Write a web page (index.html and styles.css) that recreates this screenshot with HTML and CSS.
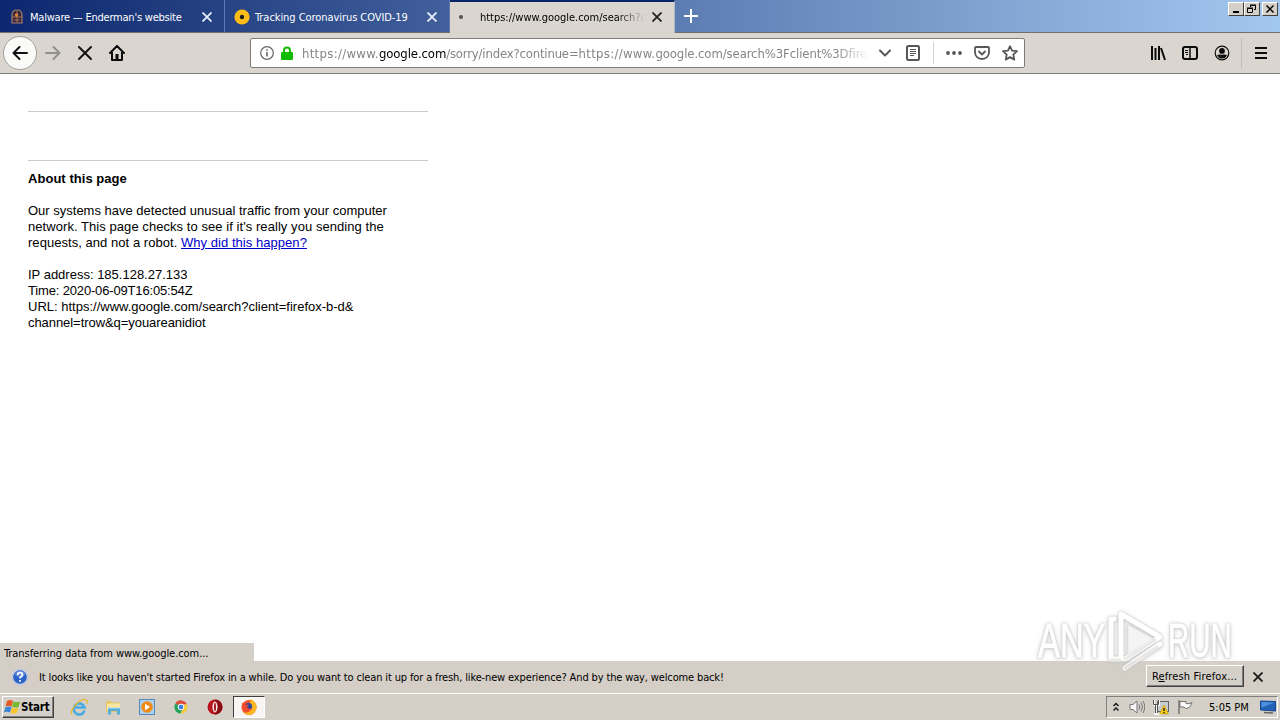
FILE: index.html
```html
<!DOCTYPE html>
<html lang="en">
<head>
  <meta charset="UTF-8">
  <title>https://www.google.com/search</title>
  <link rel="stylesheet" href="styles.css">
</head>
<body>

  <div class="tabbar">
    <div class="tab">
      <svg class="favicon" viewBox="0 0 16 16">
        <path d="M3 14V6q0-5 5-5t5 5v8z" fill="#35243b" stroke="#a3826f" stroke-width="1.200"/>
        <path d="M8 2v12M3 8h10M5 11h6" stroke="#a87258" stroke-width="1"/>
        <circle cx="7.500" cy="6" r="1.800" fill="#d98237"/>
      </svg>
      <span class="tab-title t1">Malware — Enderman's website</span>
      <svg class="tab-close" viewBox="0 0 10 10"><path d="M.5.5l9 9M9.500.5l-9 9"/></svg>
    </div>
    <div class="tab">
      <svg class="favicon" viewBox="0 0 16 16">
        <circle cx="8" cy="8" r="7.600" fill="#fbbc18"/>
        <circle cx="8" cy="8" r="2.200" fill="#1b1b20"/>
      </svg>
      <span class="tab-title t2">Tracking Coronavirus COVID-19</span>
      <svg class="tab-close" viewBox="0 0 10 10"><path d="M.5.5l9 9M9.500.5l-9 9"/></svg>
    </div>
    <div class="tab active">
      <span class="throbber"></span>
      <span class="tab-title t3">https://www.google.com/search?q</span>
      <svg class="tab-close" viewBox="0 0 10 10"><path d="M.5.5l9 9M9.500.5l-9 9"/></svg>
    </div>
    <svg class="new-tab" viewBox="0 0 14 14"><path d="M7 0v14M0 7h14" stroke="#fff" stroke-width="2"/></svg>
    <div class="caption">
      <span class="cap"><svg viewBox="0 0 12 10"><path d="M3 8h6" stroke="#000" stroke-width="2"/></svg></span>
      <span class="cap"><svg viewBox="0 0 12 10" fill="none" stroke="#000"><path d="M4.500 3V1.500h5v4H8M4 1h6M1.500 4.500h5v4h-5zM1 4h6"/></svg></span>
      <span class="cap last"><svg viewBox="0 0 12 10"><path d="M2.500 1.500l7 7M9.500 1.500l-7 7" stroke="#000" stroke-width="1.500"/></svg></span>
    </div>
  </div>

  <div class="navbar">
    <div class="back">
      <svg width="16" height="16" viewBox="0 0 16 16" fill="none" stroke="#111" stroke-width="2" stroke-linecap="round" stroke-linejoin="round"><path d="M15 8H1.500M7.500 2l-6 6 6 6"/></svg>
    </div>
    <svg class="forward" viewBox="0 0 16 16" fill="none" stroke="#92908c" stroke-width="2" stroke-linecap="round" stroke-linejoin="round"><path d="M1 8h13.500M8.500 2l6 6-6 6"/></svg>
    <svg class="stop" viewBox="0 0 16 16" stroke="#111" stroke-width="2" stroke-linecap="round"><path d="M2 2l12 12M14 2L2 14"/></svg>
    <svg class="home" viewBox="0 0 16 16" fill="none" stroke="#0c0c0d" stroke-width="2" stroke-linejoin="round" stroke-linecap="round"><path d="M1 8l7-7 7 7M3 7v8h10V7"/><path d="M8 9v5" stroke-width="3" stroke-linecap="butt"/></svg>

    <div class="urlbar">
      <svg class="info" viewBox="0 0 14 14" fill="none" stroke="#66666a"><circle cx="7" cy="7" r="6.300" stroke-width="1.200"/><path d="M7 6v4.500M7 3.200v1.600" stroke-width="1.600"/></svg>
      <svg class="lock" viewBox="0 0 12 14"><path d="M3 7V4.500a3 3 0 0 1 6 0V7" fill="none" stroke="#12bc00" stroke-width="2"/><rect y="6" width="12" height="8" rx="1" fill="#12bc00"/></svg>
      <div class="url"><span class="wide">https://www.</span><b>google.com</b><span class="tight">/sorry/index?continue=</span><span class="wide">https://www.</span>google.com/search%3Fclient%3Dfirefo</div>
      <svg class="drop" viewBox="0 0 12 8" fill="none" stroke="#57575a" stroke-width="2" stroke-linecap="round" stroke-linejoin="round"><path d="M1 1.500l5 5 5-5"/></svg>
      <svg class="reader" viewBox="0 0 14 16" fill="none" stroke="#57575a"><rect x="1" y="1" width="12" height="14" rx="1.500" stroke-width="2"/><path d="M4 4.500h6M4 6.500h6M4 8.500h6M4 10.500h4"/></svg>
      <span class="url-sep"></span>
      <svg class="dots" viewBox="0 0 16 4" fill="#57575a"><circle cx="2" cy="2" r="1.900"/><circle cx="8" cy="2" r="1.900"/><circle cx="14" cy="2" r="1.900"/></svg>
      <svg class="pocket" viewBox="0 0 16 16" fill="none" stroke="#57575a" stroke-width="1.800" stroke-linecap="round" stroke-linejoin="round"><path d="M2 2h12q1 0 1 1v4.500a7 6.500 0 0 1-14 0V3q0-1 1-1z"/><path d="M5 6.500l3 3 3-3"/></svg>
      <svg class="star" viewBox="0 0 16 16" fill="none" stroke="#57575a" stroke-width="1.800" stroke-linejoin="round"><path d="M8 1.200l2 4.500 5 .5-3.700 3.400 1 5L8 12.100l-4.300 2.500 1-5L1 6.200l5-.5z"/></svg>
    </div>

    <div class="tools">
      <svg viewBox="0 0 16 16" stroke="#0c0c0d" stroke-width="2"><path d="M2 1v14M5.500 3v12M9 1v14M11 3l4 12"/></svg>
      <svg viewBox="0 0 16 16" fill="none" stroke="#0c0c0d"><rect x="1" y="2" width="14" height="12" rx="2" stroke-width="2"/><path d="M8 2v12" stroke-width="1.500"/><path d="M3 5.500h3M3 7.500h3M4 9.500h2"/></svg>
      <svg viewBox="0 0 16 16"><circle cx="8" cy="8" r="6.800" fill="none" stroke="#0c0c0d" stroke-width="1.200"/><circle cx="8" cy="5.900" r="2.900" fill="#0c0c0d"/><path d="M3 10q2.500-.8 5-.2 2.500-.6 5 .2-1.500 3.500-5 3.500T3 10z" fill="#0c0c0d"/></svg>
      <span class="tool-sep"></span>
      <svg class="menu" viewBox="0 0 16 16" stroke="#0c0c0d" stroke-width="2"><path d="M2 3h12M2 8h12M2 13h12"/></svg>
    </div>
  </div>

  <div class="content">
    <div class="page">
      <hr>
      <hr class="second">
      <div class="about">About this page</div>
      <p>Our systems have detected unusual traffic from your computer<br>
        <span class="p2">network. This page checks to see if it's really you sending the</span><br>
        <span class="p3">requests, and not a robot. <a href="#">Why did this happen?</a></span></p>
      <p>IP address: 185.128.27.133<br>
        <span class="p5">Time: 2020-06-09T16:05:54Z</span><br>
        URL: https://www.google.com/search?client=firefox-b-d&amp;<br>
        <span class="p7">channel=trow&amp;q=youareanidiot</span></p>
    </div>
    <div class="status">Transferring data from www.google.com...</div>
  </div>

  <div class="notice">
    <svg class="help" viewBox="0 0 16 16"><circle cx="8" cy="8" r="7.400" fill="#2c61c4" stroke="#b9cbe8" stroke-width="1.200"/><ellipse cx="8" cy="5" rx="5" ry="3.300" fill="#6389d6"/><path d="M5.700 6q0-2.400 2.400-2.400T10.400 6Q10.400 7.200 8.100 8.600V9.600M8.100 11v1.800" fill="none" stroke="#fff" stroke-width="1.700"/></svg>
    <span class="notice-text">It looks like you haven't started Firefox in a while. Do you want to clean it up for a fresh, like-new experience? And by the way, welcome back!</span>
    <button class="refresh">R<u>e</u>fresh Firefox...</button>
    <svg class="notice-close" viewBox="0 0 10 10"><path d="M.5.5l9 9M9.500.5l-9 9" stroke="#1a1a1a" stroke-width="1.800"/></svg>
  </div>

  <div class="taskbar">
    <button class="start">
      <svg viewBox="0 0 17 16"><path d="M3 2q3-2 6 0L7.500 7.500q-3-1.500-6 0z" fill="#e85a24"/><path d="M9.500 2.500q3 1.500 6.500 0L14.500 8q-3 1.200-6.500-.3z" fill="#76b82e"/><path d="M1.500 8.200q3-1.500 6 0L6 13.500q-3-1.700-6 0z" fill="#3a86d8"/><path d="M8 8.500q3 1.600 6.500.3L12.800 14q-3 1.300-6.300-.3z" fill="#fbc52a"/></svg>
      <span>Start</span>
    </button>
    <div class="quick">
      <svg viewBox="0 0 18 18"><path d="M14.500 12.500A5.500 5.500 0 1 1 14.500 9.500H5" fill="none" stroke="#45a9e2" stroke-width="2.600"/><path d="M2 16.500C-1 12 11-1 16.500 2q1.500 1-.3 4" fill="none" stroke="#e8b834" stroke-width="1.300"/></svg>
      <svg viewBox="0 0 18 18"><path d="M2 3h5l1 1.500h8V14H2z" fill="#e5c565"/><path d="M3 5.500h13V13H3z" fill="#f8e6a0"/><path d="M4 16.500V10h12v6.500h-3V13H7v3.500z" fill="#58aedb"/><path d="M4 10h12" stroke="#a8dcf0"/></svg>
      <svg viewBox="0 0 18 18"><rect x="1.500" y="1.500" width="15" height="15" fill="#acd0ed" stroke="#548abd"/><circle cx="9" cy="9" r="5.800" fill="#f28b15"/><path d="M7 5.700v6.600L12 9z" fill="#fff"/></svg>
      <svg viewBox="0 0 18 18"><path d="M9 9L3.400 5.500A6.500 6.500 0 0 1 15 6.500H9z" fill="#dd4a38"/><path d="M9 9L3.400 5.500A6.500 6.500 0 0 0 8.500 15.500L11 11z" fill="#25a35a"/><path d="M9 6.500h6A6.500 6.500 0 0 1 8.500 15.500L11.500 10z" fill="#f8cc35"/><circle cx="9" cy="9" r="2.900" fill="#3f7fe0" stroke="#fff"/></svg>
      <svg viewBox="0 0 18 18"><circle cx="9" cy="9" r="7.500" fill="#b8141c"/><path d="M9 1.500a7.500 7.500 0 0 1 0 15z" fill="#8c0c14"/><ellipse cx="9" cy="9" rx="2.600" ry="5.400" fill="#f0e6e2"/><ellipse cx="9" cy="9" rx="1" ry="4.300" fill="#a81820"/></svg>
    </div>
    <div class="task">
      <svg viewBox="0 0 18 18"><circle cx="9" cy="9.500" r="7.500" fill="#f5532b"/><path d="M10 1q6 2 6.700 8-.5 7-7.700 8-4 0-6-3 5 2 8-2 2-4-1-7z" fill="#fcb724"/><circle cx="8.500" cy="8.500" r="3.600" fill="#29479e"/><path d="M2 5q2 0 3 2 2-1 4 0l-2 2q1 3 5 1-2 4-6 3-4-2-4-8z" fill="#f04b2d"/></svg>
    </div>
    <div class="tray">
      <svg class="chev" viewBox="0 0 8 10" fill="none" stroke="#111" stroke-width="1.400"><path d="M1.500 4L4 1.500 6.500 4M1.500 8.500L4 6l2.500 2.500"/></svg>
      <svg class="sound" viewBox="0 0 16 16" fill="#f7f7f7" stroke="#77777a"><path d="M1 5.500h3L8 2v12l-4-3.500H1z"/><path d="M10 5.500q1.500 2.500 0 5M12 3.500q3 4.500 0 9M14 2q3.500 6 0 12" fill="none"/></svg>
      <svg class="net" viewBox="0 0 16 16"><rect x="4.500" y="2.500" width="11" height="10" fill="#c9cccf" stroke="#606468"/><path d="M1 1v5h5V1M3.500 6v9M1 15h8" fill="none" stroke="#f8f8f8" stroke-width="2"/><path d="M.5 1v4.500h5V1M4.500 6v8M2.500 6v8" fill="none" stroke="#555"/><path d="M11 6l4.500 9H6.500z" fill="#f6cf16" stroke="#bd920b" stroke-width=".6"/><path d="M11 9v3M11 13v1.200" stroke="#111" stroke-width="1.300"/></svg>
      <svg class="flag" viewBox="0 0 16 16"><path d="M2 1v14" stroke="#747474" stroke-width="1.500"/><path d="M3 2.500h6v2q3 1 6-1-1 5-5 6-2 0-3-1.500H3z" fill="#fafafa" stroke="#737373"/></svg>
      <span class="clock">5:05 PM</span>
      <svg class="desk" viewBox="0 0 16 14"><path d="M.5 1l15 .5v9.500L.5 10z" fill="#2462b8" stroke="#12468f"/><path d="M1.500 2l13 .5-13 5z" fill="#4d90dd"/><path d="M4 12.500l9 .5" stroke="#666" stroke-width="1.500"/></svg>
    </div>
  </div>

  <div class="watermark">
    <span class="any">ANY</span>
    <svg viewBox="0 0 58 64" fill="none" stroke-linejoin="round" stroke-linecap="round">
      <path d="M14 6v42M14 6l39 23-35 22M4 11v40h10M4 11h3M18 60l35-24" stroke="#fff" stroke-width="5"/>
      <path d="M21 17v29l25-15z" fill="#f3f3f3" stroke="#e4e4e4"/>
      <path d="M4 52h9M18 60l32-21M18 51l30-19" stroke="#e6e4e2" stroke-width="3"/>
    </svg>
    <span class="run">RUN</span>
  </div>

</body>
</html>
```
FILE: styles.css
```css
* {
  box-sizing: border-box;
}

body {
  margin: 0;
  width: 1280px;
  height: 720px;
  display: flex;
  flex-direction: column;
  overflow: hidden;
  position: relative;
  background: #fff;
  color: #000;
  font-family: "DejaVu Sans Condensed", "DejaVu Sans", sans-serif;
  font-stretch: condensed;
  font-size: 11px;
}

svg {
  display: block;
  flex: none;
}

span {
  white-space: nowrap;
}

/* tab strip */
.tabbar {
  height: 33px;
  flex: none;
  display: flex;
  background: linear-gradient(90deg, #0c276e, #a3c8ef);
  border-bottom: 1px solid #716f6b;
}

.tab {
  width: 225px;
  height: 32px;
  display: flex;
  align-items: center;
  padding: 2px 12px 0 9px;
  color: #fff;
  border-right: 1px solid #6278b2;
}

.tab.active {
  height: 33px;
  padding-bottom: 1px;
  background: #dad6cf;
  color: #000;
  border-top: 2px solid #0a246a;
  border-right-color: #b4b8c2;
  padding-top: 0;
}

.favicon {
  width: 16px;
  height: 16px;
  margin-right: 5px;
}

.throbber {
  width: 4px;
  height: 4px;
  border-radius: 50%;
  background: #55534f;
  margin: 0 17px 0 0;
}

.tab-title {
  flex: 1;
}

.t1 { letter-spacing: -0.22px; }
.t2 { letter-spacing: -0.06px; }

.t3 {
  -webkit-mask-image: linear-gradient(90deg, #000 82%, transparent 99%);
  mask-image: linear-gradient(90deg, #000 82%, transparent 99%);
  margin-right: 5px;
  letter-spacing: -0.02px;
}

.tab-close {
  width: 10px;
  height: 10px;
  stroke: #e9eefa;
  stroke-width: 1.8;
}

.active .tab-close {
  stroke: #222;
}

.new-tab {
  width: 14px;
  height: 14px;
  margin: 9px 0 0 9px;
}

.caption {
  display: flex;
  margin: 2px 2px 0 auto;
}

.cap {
  width: 16px;
  height: 14px;
  padding: 1px;
  background: #d4d0c8;
  border: 1px solid;
  border-color: #fff #404040 #404040 #fff;
}

.cap svg {
  width: 12px;
  height: 10px;
}

.cap.last {
  margin-left: 2px;
}

/* toolbar */
.navbar {
  height: 41px;
  flex: none;
  display: flex;
  align-items: center;
  background: #dad6cf;
  border-bottom: 1px solid #807e7a;
}

.back {
  width: 34px;
  height: 34px;
  margin-left: 3px;
  border: 1px solid #a3a19c;
  border-radius: 50%;
  background: #fafaf9;
  display: flex;
  align-items: center;
  justify-content: center;
}

.forward, .stop, .home {
  width: 16px;
  height: 16px;
}

.forward { margin-left: 8px; }
.stop { margin-left: 16px; }
.home { margin-left: 16px; }

.urlbar {
  width: 775px;
  height: 30px;
  margin-left: 125px;
  padding-left: 9px;
  display: flex;
  align-items: center;
  background: #fff;
  border: 1px solid #7f7d79;
  border-radius: 2px;
}

.info {
  width: 14px;
  height: 14px;
}

.lock {
  width: 12px;
  height: 14px;
  margin-left: 7px;
}

.url {
  width: 567px;
  margin-left: 9px;
  overflow: hidden;
  white-space: nowrap;
  color: #858588;
  font-size: 13px;
  letter-spacing: -0.1px;
  -webkit-mask-image: linear-gradient(90deg, #000 94%, transparent);
  mask-image: linear-gradient(90deg, #000 94%, transparent);
}

.url b {
  font-weight: normal;
  color: #000;
}

.url .wide { letter-spacing: 0.31px; }
.url .tight { letter-spacing: -0.18px; }

.drop {
  width: 12px;
  height: 8px;
  margin-left: 10px;
}

.reader {
  width: 14px;
  height: 16px;
  margin-left: 15px;
}

.url-sep {
  width: 1px;
  height: 22px;
  background: #d0d0d0;
  margin-left: 13px;
}

.dots {
  width: 16px;
  height: 4px;
  margin-left: 12px;
}

.pocket, .star {
  width: 16px;
  height: 16px;
  margin-left: 12px;
}

.tools {
  display: flex;
  align-items: center;
  margin-left: auto;
  margin-right: 11px;
}

.tools svg {
  width: 16px;
  height: 16px;
  margin-right: 16px;
}

.tool-sep {
  width: 1px;
  height: 30px;
  background: #c0bdb7;
  margin: 0 11px 0 -5px;
}

.tools .menu {
  margin-right: 0;
}

/* page */
.content {
  flex: 1;
  display: flex;
  flex-direction: column;
  justify-content: space-between;
  min-height: 0;
}

.page {
  width: 400px;
  margin: 37px 0 0 28px;
  font: 13px/16px "Liberation Sans", Arial, sans-serif;
}

.page hr {
  height: 1px;
  margin: 0;
  border: 0;
  background: #ccc;
}

.page hr.second {
  margin: 48px 0 10px;
}

.about {
  font-weight: bold;
  letter-spacing: 0.04px;
}

.page p {
  margin: 16px 0;
}

.page a {
  color: #0000cc;
}

.p2 { letter-spacing: 0.06px; }
.p3 { letter-spacing: 0.045px; }
.p5 { letter-spacing: -0.16px; }
.p7 { letter-spacing: -0.06px; }

.status {
  width: 254px;
  height: 18px;
  padding: 3px 4px 0;
  line-height: 15px;
  background: #d4d0c8;
  white-space: nowrap;
  letter-spacing: -0.07px;
}

.notice {
  height: 32px;
  flex: none;
  display: flex;
  align-items: center;
  padding: 0 17px 0 12px;
  background: #d4cec6;
}

.help {
  width: 16px;
  height: 16px;
}

.notice-text {
  margin-left: 11px;
  letter-spacing: -0.14px;
}

.refresh {
  width: 98px;
  height: 22px;
  margin: -2px 9px 0 auto;
  padding: 0 1px 0 0;
  background: #d4d0c8;
  border: 1px solid;
  border-color: #fff #404040 #404040 #fff;
  box-shadow: inset -1px -1px #808080;
  font: inherit;
  letter-spacing: 0.15px;
  white-space: nowrap;
}

.notice-close {
  width: 10px;
  height: 10px;
}

/* taskbar */
.taskbar {
  height: 27px;
  flex: none;
  display: flex;
  align-items: center;
  background: #d4d0c8;
  border-top: 1px solid #fff;
  padding: 2px 2px 2px;
}

.start {
  width: 52px;
  height: 22px;
  padding: 0 1px;
  display: flex;
  align-items: center;
  background: #d4d0c8;
  border: 1px solid;
  border-color: #fff #404040 #404040 #fff;
  box-shadow: inset -1px -1px #808080;
  font: bold 11.5px "DejaVu Sans Condensed", "DejaVu Sans", sans-serif;
  letter-spacing: -0.2px;
}

.start svg {
  width: 17px;
  height: 16px;
}

.quick {
  display: flex;
  gap: 15.8px;
  margin-left: 16.4px;
}

.quick svg {
  width: 18px;
  height: 18px;
}

.task {
  width: 32px;
  height: 22px;
  margin-left: 9.4px;
  display: flex;
  align-items: center;
  justify-content: center;
  background: #f7f6f4;
  border: 1px solid;
  border-color: #404040 #fff #fff #404040;
}

.task svg {
  width: 18px;
  height: 18px;
}

.tray {
  width: 172px;
  height: 22px;
  margin-left: auto;
  padding-left: 5px;
  display: flex;
  align-items: center;
  border: 1px solid;
  border-color: #808080 #fff #fff #808080;
}

.chev {
  width: 8px;
  height: 10px;
}

.sound, .net, .flag {
  width: 16px;
  height: 16px;
}

.sound { margin-left: 9px; }
.net { margin-left: 8px; }
.flag { margin-left: 8px; }

.clock {
  width: 40px;
  margin-left: 16px;
}

.desk {
  width: 16px;
  height: 14px;
  margin-left: 11px;
}

/* logo lying over the page corner */
.watermark {
  position: absolute;
  left: 1038px;
  top: 608px;
  width: 195px;
  height: 64px;
  display: flex;
  align-items: center;
  opacity: 0.85;
  color: #fff;
  font: 49px/64px "Liberation Sans", Arial, sans-serif;
  filter: drop-shadow(0 0 1px #bbb) drop-shadow(0 1px 2px #ccc);
}

.watermark svg {
  width: 58px;
  height: 64px;
  margin-left: 3px;
}

.any, .run {
  width: 66px;
  flex: none;
  transform: scaleX(0.67);
  transform-origin: left;
  -webkit-text-stroke: 0.8px #fff;
}

.run {
  margin-left: 3px;
  transform: scaleX(0.6);
}
```
